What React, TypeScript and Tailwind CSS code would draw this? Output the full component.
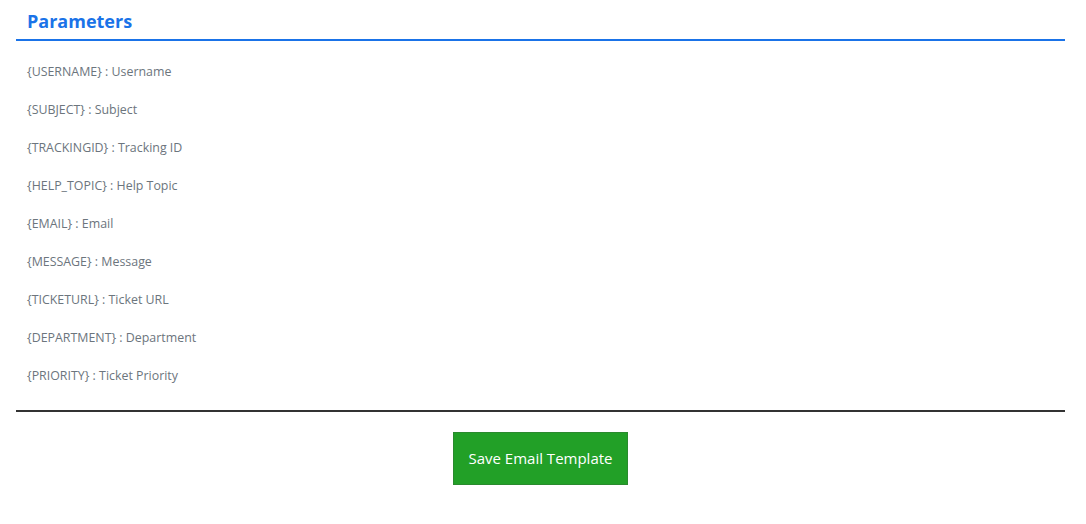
const params = [
  ["{USERNAME}", "Username"],
  ["{SUBJECT}", "Subject"],
  ["{TRACKINGID}", "Tracking ID"],
  ["{HELP_TOPIC}", "Help Topic"],
  ["{EMAIL}", "Email"],
  ["{MESSAGE}", "Message"],
  ["{TICKETURL}", "Ticket URL"],
  ["{DEPARTMENT}", "Department"],
  ["{PRIORITY}", "Ticket Priority"],
];

export default function App() {
  return (
    <div className="bg-white min-h-screen pl-4 pr-[21px] font-['Open_Sans',sans-serif]">
      <div className="border-b-2 border-[#1a73e8] px-[11px] pt-[8px] pb-[5px]">
        <h2 className="text-[18px] leading-[26px] font-bold text-[#1a73e8]">Parameters</h2>
      </div>
      <ul className="pt-[12px] pb-[15px] px-[11px]">
        {params.map(([key, label]) => (
          <li key={key} className="h-[38px] flex items-center text-[12.4px] text-[#6c757d]">
            {key} : {label}
          </li>
        ))}
      </ul>
      <div className="border-t-2 border-[#333]" />
      <div className="flex justify-center pt-[20px]">
        <button className="bg-[#22a027] border border-[#2a8a2e] text-white text-[15px] w-[175px] h-[53px]">
          Save Email Template
        </button>
      </div>
    </div>
  );
}
